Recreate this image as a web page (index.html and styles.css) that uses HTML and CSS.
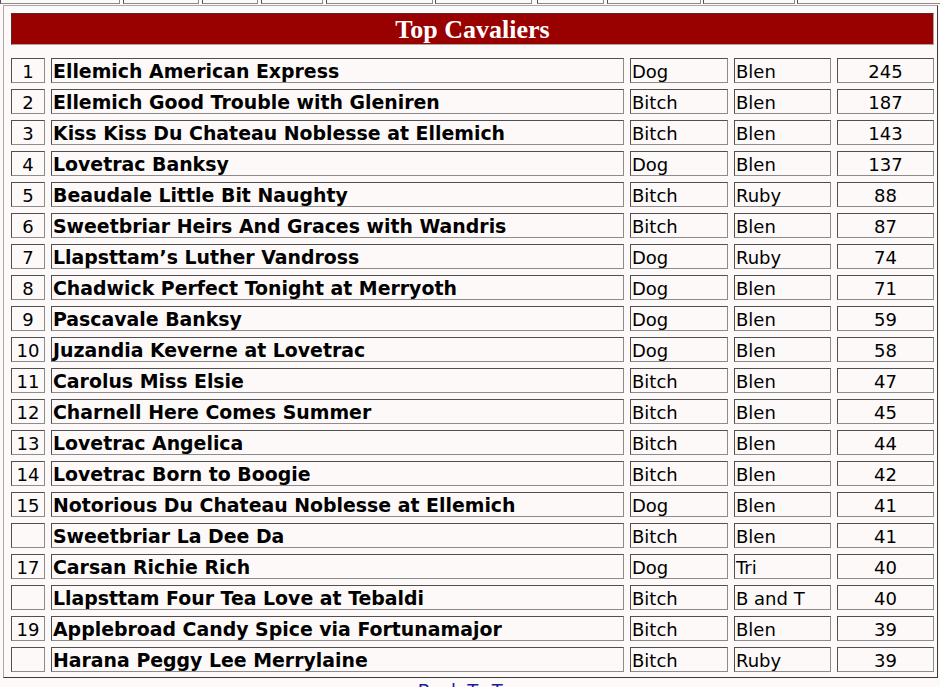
FILE: index.html
```html
<!DOCTYPE html>
<html>
<head>
<meta charset="utf-8">
<title>Top Cavaliers</title>
<link rel="stylesheet" href="styles.css">
</head>
<body>
<div class="nav">
  <div class="nav-cell w1"><a href="#">Home</a></div>
  <div class="nav-cell w2"><a href="#">Puppy</a></div>
  <div class="nav-cell w3"><a href="#">News</a></div>
  <div class="nav-cell w4"><a href="#">Links</a></div>
  <div class="nav-cell w5"><a href="#">Breeders</a></div>
  <div class="nav-cell w6"><a href="#">Results</a></div>
  <div class="nav-cell w7"><a href="#">Diary</a></div>
  <div class="nav-cell w8"><a href="#">Contact</a></div>
  <div class="nav-cell w9"><a href="#">Awards</a></div>
  <div class="nav-cell w10"><a href="#">Gallery</a></div>
</div>
<div class="board">
  <div class="title">Top Cavaliers</div>
  <div class="rows">
    <div class="c num">1</div><div class="c name">Ellemich American Express</div><div class="c">Dog</div><div class="c">Blen</div><div class="c pts">245</div>
    <div class="c num">2</div><div class="c name">Ellemich Good Trouble with Gleniren</div><div class="c">Bitch</div><div class="c">Blen</div><div class="c pts">187</div>
    <div class="c num">3</div><div class="c name">Kiss Kiss Du Chateau Noblesse at Ellemich</div><div class="c">Bitch</div><div class="c">Blen</div><div class="c pts">143</div>
    <div class="c num">4</div><div class="c name">Lovetrac Banksy</div><div class="c">Dog</div><div class="c">Blen</div><div class="c pts">137</div>
    <div class="c num">5</div><div class="c name">Beaudale Little Bit Naughty</div><div class="c">Bitch</div><div class="c">Ruby</div><div class="c pts">88</div>
    <div class="c num">6</div><div class="c name">Sweetbriar Heirs And Graces with Wandris</div><div class="c">Bitch</div><div class="c">Blen</div><div class="c pts">87</div>
    <div class="c num">7</div><div class="c name">Llapsttam’s Luther Vandross</div><div class="c">Dog</div><div class="c">Ruby</div><div class="c pts">74</div>
    <div class="c num">8</div><div class="c name">Chadwick Perfect Tonight at Merryoth</div><div class="c">Dog</div><div class="c">Blen</div><div class="c pts">71</div>
    <div class="c num">9</div><div class="c name">Pascavale Banksy</div><div class="c">Dog</div><div class="c">Blen</div><div class="c pts">59</div>
    <div class="c num">10</div><div class="c name">Juzandia Keverne at Lovetrac</div><div class="c">Dog</div><div class="c">Blen</div><div class="c pts">58</div>
    <div class="c num">11</div><div class="c name">Carolus Miss Elsie</div><div class="c">Bitch</div><div class="c">Blen</div><div class="c pts">47</div>
    <div class="c num">12</div><div class="c name">Charnell Here Comes Summer</div><div class="c">Bitch</div><div class="c">Blen</div><div class="c pts">45</div>
    <div class="c num">13</div><div class="c name">Lovetrac Angelica</div><div class="c">Bitch</div><div class="c">Blen</div><div class="c pts">44</div>
    <div class="c num">14</div><div class="c name">Lovetrac Born to Boogie</div><div class="c">Bitch</div><div class="c">Blen</div><div class="c pts">42</div>
    <div class="c num">15</div><div class="c name">Notorious Du Chateau Noblesse at Ellemich</div><div class="c">Dog</div><div class="c">Blen</div><div class="c pts">41</div>
    <div class="c num"></div><div class="c name">Sweetbriar La Dee Da</div><div class="c">Bitch</div><div class="c">Blen</div><div class="c pts">41</div>
    <div class="c num">17</div><div class="c name">Carsan Richie Rich</div><div class="c">Dog</div><div class="c">Tri</div><div class="c pts">40</div>
    <div class="c num"></div><div class="c name">Llapsttam Four Tea Love at Tebaldi</div><div class="c">Bitch</div><div class="c">B and T</div><div class="c pts">40</div>
    <div class="c num">19</div><div class="c name">Applebroad Candy Spice via Fortunamajor</div><div class="c">Bitch</div><div class="c">Blen</div><div class="c pts">39</div>
    <div class="c num"></div><div class="c name">Harana Peggy Lee Merrylaine</div><div class="c">Bitch</div><div class="c">Ruby</div><div class="c pts">39</div>
  </div>
</div>
<div class="back"><a href="#">Back To Top</a></div>
</body>
</html>
```

FILE: styles.css
```css
html, body {
  margin: 0;
  padding: 0;
}
body {
  background: #fdf9f9;
  font-family: "DejaVu Sans", Verdana, sans-serif;
  color: #000;
  height: 687px;
  overflow: hidden;
}
.nav {
  display: flex;
  height: 5px;
  overflow: hidden;
}
.nav-cell {
  box-sizing: border-box;
  height: 28px;
  margin-top: -24px;
  border: 1px solid #8a8a8a;
  border-top-color: #505050;
  border-left-color: #505050;
  font-size: 16px;
  line-height: 30px;
  text-align: center;
  flex: none;
}
.nav-cell a { color: #1a1aa6; text-decoration: none; }
.w1 { width: 120px; margin-right: 3px; }
.w2 { width: 76px; margin-right: 3px; }
.w3 { width: 56px; margin-right: 3px; }
.w4 { width: 62px; margin-right: 3px; }
.w5 { width: 107px; margin-right: 2px; }
.w6 { width: 97px; margin-right: 5px; }
.w7 { width: 67px; margin-right: 3px; }
.w8 { width: 94px; margin-right: 2px; }
.w9 { width: 92px; margin-right: 2px; }
.w10 { width: 144px; }

.board {
  box-sizing: border-box;
  width: 935px;
  margin-left: 3px;
  border: 1px solid;
  border-color: #a8a8a8 #3a3a3a #3a3a3a #a8a8a8;
  padding: 7px 3px 5px 7px;
}
.title {
  box-sizing: border-box;
  height: 32px;
  background: #990000;
  border: 1px solid;
  border-color: #5a2a2a #b0a0a0 #b0a0a0 #5a2a2a;
  color: #fff;
  text-align: center;
  font-family: "Liberation Serif", "Times New Roman", serif;
  font-weight: bold;
  font-size: 26px;
  line-height: 31px;
}
.rows {
  margin-top: 13px;
  display: grid;
  grid-template-columns: 34px 573px 98px 97px 97px;
  column-gap: 6px;
  row-gap: 6px;
}
.c {
  box-sizing: border-box;
  height: 25px;
  border: 1px solid;
  border-color: #505050 #8c8c8c #8c8c8c #505050;
  padding: 1px 1px 0;
  font-size: 18px;
  line-height: 23px;
  white-space: nowrap;
  overflow: hidden;
}
.num, .pts { text-align: center; }
.name { font-weight: bold; font-size: 18.9px; }
.back {
  text-align: center;
  font-size: 18px;
  line-height: 22px;
  margin-top: 2px;
}
.back a { color: #1a1aa6; text-decoration: none; }
```
